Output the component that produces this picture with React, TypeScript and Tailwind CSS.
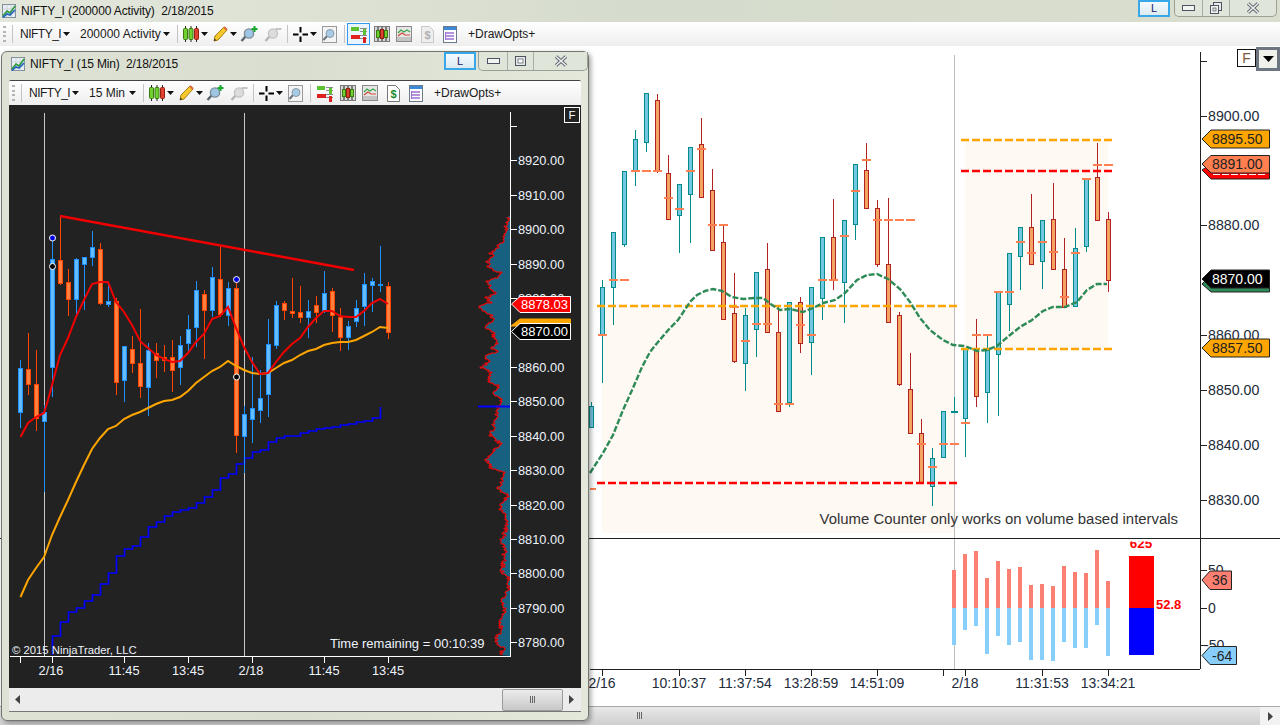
import React from 'react';

type Candle = [number, number, number, number];

// hi, top, bottom, low per bar; first bar of each list sits at the left edge
const darkBars: ['b' | 'o', ...Candle][] = [
  ['b', 360, 368, 412, 428], ['o', 333, 369, 384, 395], ['o', 350, 384, 418, 431], ['b', 405, 412, 421, 492],
  ['b', 240, 259, 367, 397], ['o', 216, 260, 283, 285], ['o', 269, 282, 299, 316], ['b', 258, 259, 299, 316],
  ['b', 257, 257, 264, 310], ['b', 231, 247, 257, 266], ['o', 243, 249, 303, 305], ['b', 282, 301, 304, 307],
  ['o', 298, 301, 382, 395], ['b', 346, 346, 380, 402], ['o', 336, 349, 363, 373], ['o', 309, 363, 386, 398],
  ['b', 343, 350, 387, 416], ['o', 343, 353, 360, 378], ['o', 345, 357, 360, 372], ['o', 340, 357, 370, 392],
  ['b', 336, 345, 367, 385], ['b', 315, 329, 343, 353], ['b', 281, 290, 327, 347], ['o', 290, 294, 310, 359],
  ['b', 267, 277, 310, 317], ['o', 246, 279, 314, 317], ['b', 282, 288, 315, 326], ['o', 283, 288, 435, 453],
  ['b', 406, 414, 436, 473], ['b', 357, 408, 419, 443], ['b', 370, 398, 410, 423], ['b', 319, 344, 394, 417],
  ['b', 301, 305, 345, 349], ['o', 301, 303, 310, 320], ['o', 278, 311, 313, 318], ['o', 286, 312, 317, 323],
  ['b', 300, 311, 317, 338], ['o', 296, 305, 312, 323], ['b', 271, 293, 311, 313], ['o', 288, 291, 315, 332],
  ['o', 308, 317, 337, 351], ['b', 321, 326, 337, 350], ['b', 300, 308, 321, 327], ['b', 273, 284, 306, 326],
  ['b', 278, 281, 285, 312], ['b', 246, 284, 285, 292], ['o', 282, 286, 332, 339],
];

const mainBars: [number, 't' | 'r', ...Candle][] = [
  [591, 't', 402, 406, 427, 428], [602, 't', 280, 287, 335, 383], [613, 't', 232, 232, 287, 325],
  [624, 't', 171, 171, 244, 247], [635, 't', 130, 139, 171, 186], [646, 't', 93, 93, 142, 152],
  [657, 'r', 94, 100, 171, 173], [668, 'r', 155, 173, 219, 219], [679, 't', 184, 184, 215, 253],
  [690, 't', 147, 147, 194, 243], [701, 'r', 118, 144, 197, 197], [712, 'r', 169, 190, 250, 250],
  [723, 'r', 225, 242, 319, 319], [734, 'r', 273, 313, 361, 363], [745, 't', 308, 315, 363, 391],
  [756, 't', 272, 272, 329, 357], [767, 'r', 243, 269, 332, 332], [778, 'r', 307, 332, 411, 412],
  [789, 't', 302, 302, 402, 407], [800, 'r', 297, 302, 343, 353], [811, 't', 287, 287, 342, 375],
  [822, 't', 237, 237, 298, 320], [833, 'r', 199, 237, 280, 290], [844, 't', 220, 220, 282, 323],
  [855, 't', 164, 164, 224, 240], [866, 'r', 143, 170, 208, 208], [877, 'r', 200, 208, 264, 267],
  [888, 'r', 198, 264, 322, 322], [899, 'r', 312, 315, 384, 386], [910, 'r', 353, 389, 433, 433],
  [921, 'r', 419, 433, 483, 483], [932, 't', 448, 458, 486, 506], [943, 't', 411, 411, 457, 458],
  [965, 't', 349, 349, 418, 457], [976, 'r', 319, 350, 396, 407], [987, 't', 335, 350, 392, 423],
  [998, 't', 292, 292, 354, 416], [1009, 't', 253, 253, 304, 331], [1020, 't', 227, 227, 256, 290],
  [1031, 'r', 194, 227, 264, 264], [1042, 't', 220, 220, 261, 289], [1053, 'r', 183, 219, 269, 269],
  [1064, 'r', 238, 269, 307, 307], [1075, 't', 228, 248, 306, 306], [1086, 't', 179, 179, 246, 252],
  [1097, 'r', 143, 177, 220, 220], [1108, 'r', 212, 219, 280, 292],
];

const pivots: [number, number][] = [
  [602, 335], [613, 280], [624, 280], [635, 171], [646, 171], [657, 171], [668, 198], [679, 209], [690, 171],
  [701, 149], [712, 225], [723, 225], [734, 307], [745, 341], [756, 324], [767, 324], [778, 404], [789, 404],
  [800, 325], [811, 335], [822, 280], [833, 280], [844, 236], [855, 191], [866, 160], [877, 220], [888, 220],
  [899, 220], [910, 220], [921, 444], [932, 467], [943, 444], [954, 444], [965, 423], [976, 335], [987, 335],
  [998, 292], [1009, 292], [1020, 242], [1031, 253], [1042, 242], [1053, 252], [1064, 297], [1075, 253],
  [1086, 179], [1097, 165], [1108, 165],
];

const redLine = '20.5,437 28,423 36,417 44,413 48,400 60,355 68,338 76,317 84,300 92,284 100,282 108,282 116,302 124,312 132,325 140,341 148,348 156,355 164,359 172,362 180,361 188,353 196,342 204,334 212,319 220,316 228,307 236,328 244,347 252,362 260,374 268,373 276,362 284,352 292,344 300,338 308,327 316,318 324,311 332,311 340,316 348,317 356,317 364,311 372,303 380,299 388,304';
const orangeLine = '20.5,597 28,580 36,568 44,557 52,535 60,517 68,500 76,482 84,465 92,449 100,438 108,429 116,426 124,419 132,415 140,412 148,408 156,404 164,401 172,400 180,397 188,391 196,383 204,377 212,371 220,367 228,361 236,366 244,370 252,373 260,374 268,373 276,368 284,363 292,360 300,355 308,351 316,349 324,345 332,343 340,342 348,342 356,340 364,336 372,332 380,327 388,328';
const stepLine = '52.5,655 52.5,636 60.5,636 60.5,622 68.5,622 68.5,612 76.5,612 76.5,608 84.5,608 84.5,601 92.5,601 92.5,595 100.5,595 100.5,584 108.5,584 108.5,573 116.5,573 116.5,556 124.5,556 124.5,549 132.5,549 132.5,546 140.5,546 140.5,537 148.5,537 148.5,527 156.5,527 156.5,522 164.5,522 164.5,516 172.5,516 172.5,512 180.5,512 180.5,510 188.5,510 188.5,508 196.5,508 196.5,503 204.5,503 204.5,497 212.5,497 212.5,490 220.5,490 220.5,478 228.5,478 228.5,474 236.5,474 236.5,464 244.5,464 244.5,458 252.5,458 252.5,452 260.5,452 260.5,450 268.5,450 268.5,442 276.5,442 276.5,438 284.5,438 284.5,436 300.5,436 300.5,433 308.5,433 308.5,431 316.5,431 316.5,429 324.5,429 324.5,428 332.5,428 332.5,427 340.5,427 340.5,425 348.5,425 348.5,424 356.5,424 356.5,422 364.5,422 364.5,421 372.5,421 372.5,418 380.5,418 380.5,407';
const greenLine = 'M590 473 L603 453 L613 435 L623 410 L633 388 L642 367 L650 352 L658 342 L670 328 L678 320 L690 302 L697 295 L705 291 L713 289 L722 291 L732 297 L743 299 L755 298 L763 298 L772 305 L780 310 L790 309 L803 312 L813 308 L823 303 L835 300 L845 293 L857 280 L867 275 L877 274 L888 279 L900 289 L910 302 L920 318 L930 330 L943 340 L953 345 L965 346 L977 351 L987 350 L997 346 L1010 335 L1020 327 L1032 320 L1043 311 L1053 307 L1065 307 L1077 302 L1087 290 L1097 284 L1107 284';

const profile: [number, number][] = [
  [217, 509], [223, 507], [233, 505], [242, 503], [245, 498], [248, 496], [253, 491], [257, 492], [262, 487], [267, 490],
  [270, 493], [272, 502], [277, 497], [281, 488], [287, 490], [293, 495], [297, 487], [302, 490], [305, 480], [309, 480],
  [313, 488], [317, 493], [322, 490], [327, 484], [332, 493], [337, 493], [342, 497], [348, 492], [351, 498], [356, 483],
  [360, 490], [367, 482], [372, 490], [380, 488], [385, 498], [393, 494], [400, 502], [407, 498], [420, 495], [435, 491],
  [443, 500], [452, 492], [460, 486], [468, 492], [472, 503], [482, 502], [488, 497], [495, 507], [508, 499], [517, 507],
  [528, 506], [540, 502], [550, 505], [563, 503], [572, 502], [577, 509], [588, 508], [600, 501], [608, 505], [618, 502],
  [630, 500], [638, 496], [645, 498], [648, 505], [655, 499],
];

function profileEdge(): string {
  const pts: string[] = [];
  for (let i = 0; i < profile.length - 1; i++) {
    const [y0, x0] = profile[i];
    const [y1, x1] = profile[i + 1];
    for (let y = y0; y < y1; y += 1) {
      const seed = Math.sin(y * 12.9898) * 43758.5453;
      const jitter = (seed - Math.floor(seed) - 0.5) * 4.5;
      const x = Math.min(509.5, Math.round(x0 + ((x1 - x0) * (y - y0)) / (y1 - y0) + jitter));
      pts.push(`${x},${y} ${x},${y + 1}`);
    }
  }
  return pts.join(' ');
}

const volBars: [number, number, number][] = [
  [954, 570, 645], [965, 554, 630], [976, 551, 626], [987, 578, 654], [998, 561, 636], [1009, 569, 645], [1020, 567, 642], [1031, 585, 660],
  [1042, 584, 660], [1053, 586, 661], [1064, 566, 642], [1075, 572, 648], [1086, 573, 648], [1097, 550, 625], [1108, 581, 656],
];

function DarkChart(): React.ReactElement {
  const edge = profileEdge();
  return (
    <svg className="block h-[583px] w-[572px] bg-[#222222]" viewBox="9 105 572 583">
      <polygon points={`510,216 ${edge} 510,656`} fill="#17607f" />
      <polyline points={edge} fill="none" stroke="#ff0000" strokeWidth="1" />
      <line x1="44.5" y1="113" x2="44.5" y2="656" stroke="#c8c8c8" />
      <line x1="244.5" y1="113" x2="244.5" y2="656" stroke="#c8c8c8" />
      <polyline points={stepLine} fill="none" stroke="#0000ff" strokeWidth="1.7" />
      <line x1="478" y1="406.5" x2="510" y2="406.5" stroke="#0000ff" strokeWidth="2" />
      {darkBars.map(([c, hi, top, bot, lo], i) => {
        const x = 20 + i * 8 + 0.5;
        const wick = c === 'b' ? '#1e90ff' : '#ff4500';
        const fill = c === 'b' ? '#63bcfb' : '#ff7f3c';
        return (
          <g key={i}>
            <line x1={x} y1={hi} x2={x} y2={lo} stroke={wick} />
            <rect x={x - 2} y={top + 0.5} width="4" height={Math.max(1, bot - top)} fill={fill} stroke={wick} />
          </g>
        );
      })}
      <polyline points={orangeLine} fill="none" stroke="#ffa500" strokeWidth="2" />
      <polyline points={redLine} fill="none" stroke="#f00000" strokeWidth="2" />
      <line x1="60" y1="216" x2="354" y2="270" stroke="#f00000" strokeWidth="2.5" />
      <circle cx="52.5" cy="238" r="3" fill="#0000e0" stroke="#ffffff" />
      <circle cx="236.5" cy="279.5" r="3" fill="#0000e0" stroke="#ffffff" />
      <circle cx="52.5" cy="266.5" r="3" fill="#000000" stroke="#ffffff" />
      <circle cx="236.5" cy="377" r="3" fill="#000000" stroke="#ffffff" />

      <line x1="510.5" y1="112" x2="510.5" y2="656" stroke="#ffffff" />
      <line x1="10" y1="656.5" x2="511" y2="656.5" stroke="#ffffff" />
      <line x1="511" y1="126.5" x2="517" y2="126.5" stroke="#ffffff" />
      {[
        [160, '8920.00'], [195, '8910.00'], [229, '8900.00'], [264, '8890.00'], [298, '8880.00'], [367, '8860.00'], [401, '8850.00'], [436, '8840.00'],
        [470, '8830.00'], [505, '8820.00'], [539, '8810.00'], [573, '8800.00'], [608, '8790.00'], [642, '8780.00'],
      ].map(([y, label]) => (
        <g key={label}>
          <line x1="511" y1={Number(y) + 0.5} x2="517" y2={Number(y) + 0.5} stroke="#ffffff" />
          <text x="518" y={Number(y) + 5} fontSize="12.8" fill="#eef3fa">{label}</text>
        </g>
      ))}
      {[20, 52, 124, 188, 252, 324, 388].map((x) => (
        <line key={x} x1={x + 0.5} y1="657" x2={x + 0.5} y2="663" stroke="#ffffff" />
      ))}
      {[
        [51, '2/16'], [124, '11:45'], [188, '13:45'], [251, '2/18'], [324, '11:45'], [388, '13:45'],
      ].map(([x, label], i) => (
        <text key={i} x={x} y="675" fontSize="12.8" fill="#eef3fa" textAnchor="middle">{label}</text>
      ))}
      <text x="12" y="654" fontSize="11.3" fill="#eef3fa">© 2015 NinjaTrader, LLC</text>
      <text x="330" y="648" fontSize="13" fill="#eef3fa">Time remaining = 00:10:39</text>

      <polygon points="511,326 520,319 570.5,319 570.5,326" fill="#ffa500" stroke="#ffa500" />
      <polygon points="511.5,331.5 520,323.5 570.5,323.5 570.5,339.5 520,339.5" fill="#000000" stroke="#ffffff" />
      <text x="521" y="336" fontSize="13" fill="#ffffff">8870.00</text>
      <polygon points="511.5,304 520,296.5 570.5,296.5 570.5,312.5 520,312.5" fill="#ff0000" stroke="#ffffff" />
      <text x="521" y="309" fontSize="13" fill="#ffffff">8878.03</text>
      <rect x="564.5" y="107.5" width="15" height="15" fill="#222222" stroke="#ffffff" />
      <text x="572" y="119" fontSize="11.5" fill="#ffffff" textAnchor="middle">F</text>
    </svg>
  );
}

function Flag({ y, right, text, fill, ink = '#222222' }: { y: number; right: number; text: string; fill: string; ink?: string }): React.ReactElement {
  return (
    <g>
      <polygon points={`1202,${y} 1211,${y - 9} ${right},${y - 9} ${right},${y + 9} 1211,${y + 9}`} fill={fill} stroke="#222222" />
      <text x="1212" y={y + 5} fontSize="14" fill={ink}>{text}</text>
    </g>
  );
}

function MainChart(): React.ReactElement {
  return (
    <svg className="block h-[660px] w-[1280px] bg-white" viewBox="0 46 1280 660">
      <defs>
        <clipPath id="volPane">
          <rect x="590" y="541.5" width="610" height="127.5" />
        </clipPath>
      </defs>
      <rect x="602" y="306" width="352" height="227" fill="#fef9f3" />
      <rect x="965" y="140" width="143" height="209" fill="#fef9f3" />
      <line x1="954.5" y1="55" x2="954.5" y2="669" stroke="#bdbdbd" />

      {mainBars.map(([x, c, hi, top, bot, lo]) => {
        const edge = c === 't' ? '#008b8b' : '#b22222';
        const fill = c === 't' ? '#74c7e0' : '#f4a460';
        return (
          <g key={x}>
            <line x1={x + 0.5} y1={hi} x2={x + 0.5} y2={lo} stroke={edge} />
            <rect x={x - 1.5} y={top + 0.5} width="4" height={bot - top} fill={fill} stroke={edge} />
          </g>
        );
      })}
      <line x1="954.5" y1="397" x2="954.5" y2="412" stroke="#008b8b" />
      <line x1="951" y1="412" x2="958" y2="412" stroke="#008b8b" strokeWidth="2" />
      {pivots.map(([x, y], i) => (
        <line key={i} x1={x - 4} y1={y} x2={x + 5} y2={y} stroke="#ff7f50" strokeWidth="2" />
      ))}
      <line x1="590" y1="489" x2="596" y2="489" stroke="#ff7f50" strokeWidth="2" />

      <line x1="597" y1="306" x2="959" y2="306" stroke="#ffa500" strokeWidth="2.4" strokeDasharray="8 3" />
      <line x1="597" y1="483" x2="959" y2="483" stroke="#ff0000" strokeWidth="2.4" strokeDasharray="8 3" />
      <line x1="961" y1="140" x2="1113" y2="140" stroke="#ffa500" strokeWidth="2.4" strokeDasharray="8 3" />
      <line x1="961" y1="171" x2="1113" y2="171" stroke="#ff0000" strokeWidth="2.4" strokeDasharray="8 3" />
      <line x1="961" y1="349" x2="1113" y2="349" stroke="#ffa500" strokeWidth="2.4" strokeDasharray="8 3" />
      <path d={greenLine} fill="none" stroke="#2e8b57" strokeWidth="2.4" strokeDasharray="6 2" />

      <text x="1178" y="524" fontSize="14.9" fill="#333333" textAnchor="end">Volume Counter only works on volume based intervals</text>

      <line x1="0" y1="538.5" x2="1280" y2="538.5" stroke="#222222" />
      <line x1="590" y1="669.5" x2="1200" y2="669.5" stroke="#222222" />
      <line x1="1200.5" y1="52" x2="1200.5" y2="669" stroke="#222222" />
      <line x1="1201" y1="61.5" x2="1207" y2="61.5" stroke="#222222" />
      {[
        [116, '8900.00'], [225, '8880.00'], [335, '8860.00'], [390, '8850.00'], [445, '8840.00'], [500, '8830.00'],
      ].map(([y, label]) => (
        <g key={label}>
          <line x1="1201" y1={Number(y) + 0.5} x2="1207" y2={Number(y) + 0.5} stroke="#222222" />
          <text x="1208" y={Number(y) + 5} fontSize="14.2" fill="#222b3a">{label}</text>
        </g>
      ))}
      {[
        [570, '50', 1208], [608, '0', 1208], [645, '-50', 1204],
      ].map(([y, label, x]) => (
        <g key={String(label)}>
          <line x1="1201" y1={Number(y) + 0.5} x2="1207" y2={Number(y) + 0.5} stroke="#222222" />
          <text x={x} y={Number(y) + 5} fontSize="14" fill="#222b3a">{label}</text>
        </g>
      ))}

      {volBars.map(([x, top, bot]) => (
        <g key={x}>
          <rect x={x - 2} y={top} width="4" height={608 - top} fill="#fb8072" />
          <rect x={x - 2} y="608" width="4" height={bot - 608} fill="#87cefa" />
        </g>
      ))}
      <rect x="1129" y="556" width="25" height="52" fill="#ff0000" />
      <rect x="1129" y="608" width="25" height="47" fill="#0000ff" />
      <g clipPath="url(#volPane)">
        <text x="1141" y="548" fontSize="13.5" fontWeight="700" fill="#ff0000" textAnchor="middle">625</text>
        <text x="1139" y="677.5" fontSize="13" fontWeight="700" fill="#0000ff" textAnchor="middle">55</text>
      </g>
      <text x="1156" y="609" fontSize="13" fontWeight="700" fill="#ff0000">52.8</text>

      {[602, 679, 745, 811, 877, 943, 965, 1042, 1108].map((x) => (
        <line key={x} x1={x + 0.5} y1="670" x2={x + 0.5} y2="676" stroke="#222222" />
      ))}
      {[
        [602, '2/16'], [679, '10:10:37'], [745, '11:37:54'], [811, '13:28:59'], [877, '14:51:09'], [965, '2/18'], [1042, '11:31:53'], [1108, '13:34:21'],
      ].map(([x, label]) => (
        <text key={String(label)} x={x} y="688" fontSize="14" fill="#222b3a" textAnchor="middle">{label}</text>
      ))}

      <Flag y={139} right={1269.5} text="8895.50" fill="#ffa500" />
      <polygon points="1202,170 1211,164 1269.5,164 1269.5,179 1211,179" fill="#ff0000" stroke="#222222" />
      <line x1="1213" y1="174.5" x2="1266" y2="174.5" stroke="#ffffff" strokeDasharray="7 2" />
      <polygon points="1202,164 1211,155.5 1269.5,155.5 1269.5,173 1211,173" fill="#ff7f50" stroke="#222222" />
      <text x="1212" y="169" fontSize="14" fill="#222222">8891.00</text>
      <polygon points="1202,284 1211,275 1269.5,275 1269.5,292 1211,292" fill="#2e8b57" stroke="#222222" />
      <Flag y={279} right={1269.5} text="8870.00" fill="#000000" ink="#ffffff" />
      <Flag y={348} right={1269.5} text="8857.50" fill="#ffa500" />
      <polygon points="1202,580 1210,571 1231.5,571 1231.5,589.5 1210,589.5" fill="#fb8072" stroke="#222222" />
      <text x="1212" y="585" fontSize="14" fill="#222222">36</text>
      <polygon points="1202,655.5 1210,646.5 1236.5,646.5 1236.5,664.5 1210,664.5" fill="#87cefa" stroke="#222222" />
      <text x="1212" y="660.5" fontSize="14" fill="#222222">-64</text>

      <rect x="1237.5" y="49.5" width="18" height="17" fill="#ffffff" stroke="#111111" />
      <text x="1246.5" y="63" fontSize="14" fill="#7a5a3a" textAnchor="middle">F</text>
    </svg>
  );
}

function AppIcon(): React.ReactElement {
  return (
    <svg width="16" height="16" viewBox="0 0 16 16">
      <rect x="1.5" y="1.5" width="13" height="13" fill="#e8eef2" stroke="#7f8f99" />
      <path d="M1.5 6h13M1.5 10h13M6 1.5v13M10 1.5v13" stroke="#c0ccd4" strokeWidth="0.7" />
      <path d="M2 13 L6 8 L9 10 L14 3" fill="none" stroke="#2a9a3a" strokeWidth="1.6" />
      <path d="M2 14.5 L6 11 L9 12 L14 7" fill="none" stroke="#2060c0" strokeWidth="1.6" />
    </svg>
  );
}

function Caret(): React.ReactElement {
  return (
    <svg width="7" height="4" viewBox="0 0 7 4">
      <path d="M0 0h7L3.5 4z" fill="#111111" />
    </svg>
  );
}

function CandlesIcon(): React.ReactElement {
  return (
    <svg width="16" height="16" viewBox="0 0 16 16">
      <path d="M2.5 0v16M8 0v16M13.5 0v16" stroke="#222222" />
      <rect x="0.5" y="2.5" width="4" height="11" rx="1" fill="#70d030" stroke="#3a7a10" />
      <rect x="6" y="2.5" width="4" height="11" rx="1" fill="#70d030" stroke="#3a7a10" />
      <rect x="11.5" y="2.5" width="4" height="11" rx="1" fill="#e04030" stroke="#902010" />
    </svg>
  );
}

function PencilIcon(): React.ReactElement {
  return (
    <svg width="15" height="16" viewBox="0 0 15 16">
      <path d="M11 1 L14 4 L5 14 L1 15 L2 10 Z" fill="#f5c92c" stroke="#a87a10" />
      <path d="M1 15 L1.6 12.6 L3.4 14.2 Z" fill="#333333" />
      <path d="M11 1 L14 4" stroke="#e06040" strokeWidth="2" />
    </svg>
  );
}

function ZoomIcon({ plus }: { plus?: boolean }): React.ReactElement {
  const tone = plus ? '#5b6670' : '#b5b5b5';
  return (
    <svg width="18" height="16" viewBox="0 0 18 16">
      <path d="M6 10 L1.5 15" stroke={tone} strokeWidth="2.4" />
      <circle cx="9" cy="7.5" r="4.6" fill={plus ? '#9fc6e4' : '#dcdcdc'} stroke={plus ? '#7c8c98' : '#c4c4c4'} strokeWidth="1.4" />
      {plus ? (
        <path d="M14.5 0v6M11.5 3h6" stroke="#12a82a" strokeWidth="2" />
      ) : (
        <path d="M11.5 3h6" stroke="#c4c4c4" strokeWidth="2" />
      )}
    </svg>
  );
}

function CrossIcon(): React.ReactElement {
  return (
    <svg width="15" height="15" viewBox="0 0 15 15">
      <path d="M7.5 0v5.5M7.5 9.500v5.500M0 7.500h5.500M9.500 7.500h5.500" stroke="#000000" strokeWidth="2" />
    </svg>
  );
}

function LensBoxIcon(): React.ReactElement {
  return (
    <svg width="15" height="17" viewBox="0 0 15 17">
      <rect x="0.5" y="0.5" width="14" height="16" fill="#f4f4f4" stroke="#9a9a9a" />
      <path d="M5 10 L1.500 14" stroke="#6a7680" strokeWidth="2" />
      <circle cx="8" cy="7.500" r="4" fill="#a8cbe6" stroke="#8a9aa8" />
    </svg>
  );
}

function BarsIcon(): React.ReactElement {
  return (
    <svg width="16" height="18" viewBox="0 0 16 18">
      <path d="M9 3.500h7M9 6.500h7M9 10.500h7M9 13.500h7" stroke="#8a8a8a" />
      <rect x="0" y="2" width="8" height="4" fill="#5cc22e" />
      <rect x="12" y="4" width="3" height="6" fill="#5cc22e" />
      <rect x="0" y="10" width="9" height="4" fill="#e02020" />
      <rect x="12" y="12" width="3" height="6" fill="#e02020" />
    </svg>
  );
}

function FramedCandlesIcon(): React.ReactElement {
  return (
    <svg width="16" height="16" viewBox="0 0 16 16">
      <rect x="0.500" y="0.500" width="15" height="15" fill="#d8d8d8" stroke="#7a7a7a" />
      <path d="M4 1v14M8 1v14M12 1v14" stroke="#222222" />
      <rect x="2.500" y="4.500" width="3" height="7" fill="#70d030" stroke="#3a7a10" />
      <rect x="6.500" y="3.500" width="3" height="9" fill="#e04030" stroke="#902010" />
      <rect x="10.500" y="4.500" width="3" height="7" fill="#70d030" stroke="#3a7a10" />
    </svg>
  );
}

function LinesIcon(): React.ReactElement {
  return (
    <svg width="16" height="16" viewBox="0 0 16 16">
      <rect x="0.500" y="0.500" width="15" height="15" fill="#e6e6e6" stroke="#8a8a8a" />
      <rect x="1" y="11" width="14" height="4" fill="#c4c4c4" />
      <path d="M2 7 L5 4 L8 6 L11 4 L14 6" fill="none" stroke="#3aa84a" strokeWidth="1.200" />
      <path d="M2 10 L6 7 L9 9 L14 9" fill="none" stroke="#d04a3a" strokeWidth="1.200" />
    </svg>
  );
}

function DollarIcon({ dim }: { dim?: boolean }): React.ReactElement {
  return (
    <svg width="13" height="17" viewBox="0 0 13 17">
      <path d="M0.500 0.500h8l4 4v12h-12z" fill={dim ? '#eeeeee' : '#ffffff'} stroke={dim ? '#c8c8c8' : '#777777'} />
      <text x="6.500" y="13" fontSize="11" fontWeight="700" textAnchor="middle" fill={dim ? '#b0b0b0' : '#1a8a2a'}>$</text>
    </svg>
  );
}

function ListIcon(): React.ReactElement {
  return (
    <svg width="14" height="17" viewBox="0 0 14 17">
      <rect x="0.500" y="0.500" width="13" height="16" fill="#ffffff" stroke="#6a7a8a" />
      <rect x="1" y="1" width="12" height="3" fill="#3a8ad8" />
      <path d="M3 7h8M3 10h8M3 13h8" stroke="#9a70d0" strokeWidth="1.400" />
      <path d="M2.500 6v8" stroke="#9a70d0" />
    </svg>
  );
}

function Sep(): React.ReactElement {
  return <div className="h-[18px] w-px bg-[#c4c4c4]" />;
}

function Toolbar({ period, periodWidth, highlight, dimDollar }: { period: string; periodWidth: string; highlight?: boolean; dimDollar?: boolean }): React.ReactElement {
  return (
    <div className="flex h-full items-center bg-gradient-to-b from-white to-[#eeeeee] pl-[3px] text-[12px] text-[#1a1a1a]">
      <div className="flex h-[16px] w-[3px] flex-col justify-between">
        <div className="h-[2px] bg-[#b4b4b4]" />
        <div className="h-[2px] bg-[#b4b4b4]" />
        <div className="h-[2px] bg-[#b4b4b4]" />
        <div className="h-[2px] bg-[#b4b4b4]" />
      </div>
      <div className="ml-[6px]"><Sep /></div>
      <span className="ml-[7px] w-[43px] tracking-[-0.5px]">NIFTY_I</span>
      <Caret />
      <span className={`ml-[10px] ${periodWidth}`}>{period}</span>
      <Caret />
      <div className="ml-[7px]"><Sep /></div>
      <div className="ml-[5px]"><CandlesIcon /></div>
      <div className="ml-[2px]"><Caret /></div>
      <div className="ml-[5px]"><PencilIcon /></div>
      <div className="ml-[2px]"><Caret /></div>
      <div className="ml-[3px]"><ZoomIcon plus /></div>
      <div className="ml-[6px]"><ZoomIcon /></div>
      <div className="ml-[5px]"><Sep /></div>
      <div className="ml-[5px]"><CrossIcon /></div>
      <div className="ml-[2px]"><Caret /></div>
      <div className="ml-[5px]"><LensBoxIcon /></div>
      <div className="ml-[7px]"><Sep /></div>
      <div className={highlight ? 'ml-[2px] flex h-[22px] w-[23px] items-center justify-center border border-[#3399ee] bg-[#e8f4ff]' : 'ml-[2px] flex h-[22px] w-[23px] items-center justify-center'}>
        <BarsIcon />
      </div>
      <div className="ml-[4px]"><FramedCandlesIcon /></div>
      <div className="ml-[6px]"><LinesIcon /></div>
      <div className="ml-[9px]"><DollarIcon dim={dimDollar} /></div>
      <div className="ml-[9px]"><ListIcon /></div>
      <span className="ml-[11px]">+DrawOpts+</span>
    </div>
  );
}

function LButton({ className }: { className: string }): React.ReactElement {
  return (
    <div className={`flex items-center justify-center border-2 border-[#38a8e8] bg-gradient-to-b from-[#f4fbff] to-[#dceaf0] text-[11px] text-[#1a2060] ${className}`}>
      L
    </div>
  );
}

function WinIcon({ kind }: { kind: 'min' | 'restore' | 'frame' | 'close' }): React.ReactElement {
  if (kind === 'min') {
    return (
      <svg width="13" height="6" viewBox="0 0 13 6">
        <rect x="0.500" y="0.500" width="12" height="5" fill="#f2f4f0" stroke="#4a5464" />
      </svg>
    );
  }
  if (kind === 'frame') {
    return (
      <svg width="11" height="10" viewBox="0 0 11 10">
        <rect x="0.500" y="0.500" width="10" height="9" fill="#e8ebe4" stroke="#4a5464" />
        <rect x="3" y="3" width="5" height="4" fill="#ffffff" stroke="#4a5464" strokeWidth="0.700" />
      </svg>
    );
  }
  if (kind === 'restore') {
    return (
      <svg width="12" height="12" viewBox="0 0 12 12">
        <rect x="3.500" y="0.500" width="8" height="8" fill="#e8ebe4" stroke="#4a5464" />
        <rect x="0.500" y="3.500" width="8" height="8" fill="#f2f4f0" stroke="#4a5464" />
        <rect x="3" y="6" width="3" height="3" fill="#e8ebe4" stroke="#4a5464" strokeWidth="0.700" />
      </svg>
    );
  }
  return (
    <svg width="14" height="12" viewBox="0 0 14 12">
      <path d="M2 1.500 L12 10.500 M12 1.500 L2 10.500" stroke="#5a6470" strokeWidth="3.400" />
      <path d="M2 1.500 L12 10.500 M12 1.500 L2 10.500" stroke="#eef0ec" strokeWidth="1.600" />
    </svg>
  );
}

function WinButtons({ widths, middle }: { widths: [string, string, string]; middle: 'restore' | 'frame' }): React.ReactElement {
  return (
    <div className="flex h-full rounded-b-[5px] border border-t-0 border-[#9aa094] bg-[#e0e5d9]">
      <div className={`flex items-center justify-center border-r border-[#a8aea2] ${widths[0]}`}><WinIcon kind="min" /></div>
      <div className={`flex items-center justify-center border-r border-[#a8aea2] ${widths[1]}`}><WinIcon kind={middle} /></div>
      <div className={`flex items-center justify-center ${widths[2]}`}><WinIcon kind="close" /></div>
    </div>
  );
}

function GripLines(): React.ReactElement {
  return (
    <div className="flex gap-px">
      <div className="h-[7px] w-px bg-[#666666]" />
      <div className="h-[7px] w-px bg-[#666666]" />
      <div className="h-[7px] w-px bg-[#666666]" />
    </div>
  );
}

function ScrollArrow({ left }: { left?: boolean }): React.ReactElement {
  return (
    <svg width="5" height="9" viewBox="0 0 5 9">
      <path d={left ? 'M5 0v9L0 4.500z' : 'M0 0v9l5-4.500z'} fill="#444444" />
    </svg>
  );
}

function ChartWindow(): React.ReactElement {
  return (
    <div className="absolute left-[1px] top-[51px] flex h-[670px] w-[588px] flex-col rounded-[6px] border border-[#70766e] bg-gradient-to-r from-[#dde2d5] via-[#d9ded0] to-[#e4e8dc] px-[7px] pb-[8px] shadow-[2px_2px_5px_rgba(0,0,0,0.35)]">
      <div className="flex h-[28px] justify-between">
        <div className="flex items-center gap-[4px] pb-[4px] pl-px">
          <AppIcon />
          <span className="whitespace-pre text-[12px] tracking-[-0.15px] text-[#111111]">NIFTY_I (15 Min)  2/18/2015</span>
        </div>
        <div className="-mr-[7px] flex h-[19px] items-start gap-[2px]">
          <LButton className="h-[18px] w-[32px]" />
          <WinButtons widths={['w-[29px]', 'w-[26px]', 'w-[53px]']} middle="frame" />
        </div>
      </div>
      <div className="h-[25px] overflow-hidden rounded-t-[2px] border-t border-[#444444]">
        <Toolbar period="15 Min" periodWidth="w-[40px]" />
      </div>
      <DarkChart />
      <div className="flex h-[24px] items-center justify-between border-b border-[#777777] bg-[#ececec] pl-[6px] pr-[7px]">
        <ScrollArrow left />
        <div className="ml-auto mr-[6px] flex h-[22px] w-[61px] items-center justify-center rounded-[2px] border border-[#9a9a9a] bg-gradient-to-b from-[#ececec] to-[#c8c8c8]">
          <GripLines />
        </div>
        <ScrollArrow />
      </div>
    </div>
  );
}

export default function App(): React.ReactElement {
  return (
    <div className="relative flex h-[725px] w-[1280px] flex-col overflow-hidden bg-white font-['Liberation_Sans',Arial,sans-serif]">
      <div className="flex h-[22px] justify-between bg-gradient-to-r from-[#e3e7dc] via-[#d6dccd] to-[#d9decf]">
        <div className="flex items-center gap-[4px] pl-px">
          <AppIcon />
          <span className="whitespace-pre text-[12px] tracking-[-0.12px] text-[#111111]">NIFTY_I (200000 Activity)  2/18/2015</span>
        </div>
        <div className="mr-[3px] flex h-[17px] gap-[4px]">
          <LButton className="h-[17px] w-[32px]" />
          <WinButtons widths={['w-[28px]', 'w-[27px]', 'w-[46px]']} middle="restore" />
        </div>
      </div>
      <div className="h-[24px]">
        <Toolbar period="200000 Activity" periodWidth="w-[83px]" highlight dimDollar />
      </div>
      <MainChart />
      <div className="relative flex h-[19px] items-center justify-between border-t border-[#a8a8a8] bg-gradient-to-b from-[#e8e8e8] to-[#cfcfcf]">
        <div className="absolute left-[637px] top-[5px]"><GripLines /></div>
        <div className="ml-auto flex h-full w-[20px] items-center justify-center bg-[#f2f2f2]">
          <ScrollArrow />
        </div>
      </div>
      <div className="absolute right-0 top-[47px] flex h-[24px] w-[24px] items-center justify-center border-[3px] border-[#6d7680] bg-[#f0f0ec]">
        <svg width="11" height="6" viewBox="0 0 11 6">
          <path d="M0 0h11L5.500 6z" fill="#000000" />
        </svg>
      </div>
      <ChartWindow />
    </div>
  );
}
